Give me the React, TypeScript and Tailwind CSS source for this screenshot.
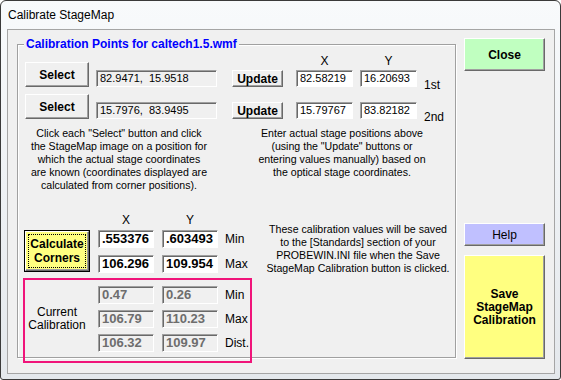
import React from 'react';

const font = { fontFamily: '"Liberation Sans", Arial, sans-serif' };

const raised =
  'border border-t-white border-l-white border-r-[#696969] border-b-[#696969] shadow-[inset_-1px_-1px_0_#a0a0a0]';
const sunken =
  'border border-t-[#a0a0a0] border-l-[#a0a0a0] border-r-white border-b-white shadow-[inset_1px_1px_0_#696969]';

const Field = ({
  value,
  className,
}: {
  value: string;
  className: string;
}) => (
  <div className={`${sunken} flex items-center pl-[3px] whitespace-pre ${className}`}>{value}</div>
);

const App = () => {
  const coordRows = [
    { point: '82.9471,  15.9518', x: '82.58219', y: '16.20693', tag: '1st', labels: true },
    { point: '15.7976,  83.9495', x: '15.79767', y: '83.82182', tag: '2nd', labels: false },
  ];

  const limits = [
    { x: '.553376', y: '.603493', label: 'Min' },
    { x: '106.296', y: '109.954', label: 'Max' },
  ];

  const current = [
    { x: '0.47', y: '0.26', label: 'Min' },
    { x: '106.79', y: '110.23', label: 'Max' },
    { x: '106.32', y: '109.97', label: 'Dist.' },
  ];

  return (
    <div
      className="relative w-[561px] h-[380px] overflow-hidden rounded-t-[6px] rounded-b-[3px] border border-[#3a3a3a] bg-gradient-to-b from-[#f8fafc] via-[#eef1f4] to-[#e4e8ec] text-black"
      style={font}
    >
      {/* Title bar */}
      <div className="h-[28px] pl-[7px] flex items-center text-[12px]">Calibrate StageMap</div>

      {/* Client area */}
      <div className="ml-[6px] w-[548px] h-[345px] border border-[#a5a5a5] bg-[#f0f0f0] flex items-start">
        {/* Group box */}
        <div className="relative ml-[9px] mt-[14px] w-[439px] h-[314px] border border-[#a0a0a0] shadow-[inset_1px_1px_0_#fff,1px_1px_0_#fff]">
          <div className="absolute left-[6px] -top-[9px] px-[2px] bg-[#f0f0f0] text-[12px] leading-[16px] font-bold text-[#0000ff]">
            Calibration Points for caltech1.5.wmf
          </div>

          <div className="flex flex-col">
            {/* Point rows */}
            {coordRows.map((row, i) => (
              <div key={i} className={`flex items-end ml-[7px] ${i === 0 ? 'mt-[10px]' : 'mt-[7px]'}`}>
                <button className={`${raised} w-[64px] h-[25px] bg-[#f0f0f0] text-[12px] font-bold`}>
                  Select
                </button>
                <Field value={row.point} className="ml-[7px] w-[121px] h-[17px] bg-[#f0f0f0] text-[11px]" />
                <button className={`${raised} ml-[15px] w-[51px] h-[17px] bg-[#f0f0f0] text-[12px] font-bold leading-none`}>
                  Update
                </button>
                <div className="ml-[13px] w-[57px] flex flex-col">
                  {row.labels && <div className="h-[13px] leading-[13px] text-[12px] text-center mb-[2px]">X</div>}
                  <Field value={row.x} className="h-[17px] bg-white text-[11px]" />
                </div>
                <div className="ml-[7px] w-[57px] flex flex-col">
                  {row.labels && <div className="h-[13px] leading-[13px] text-[12px] text-center mb-[2px]">Y</div>}
                  <Field value={row.y} className="h-[17px] bg-white text-[11px]" />
                </div>
                <div className="ml-[7px] -mb-[5px] text-[12px] leading-[13px]">{row.tag}</div>
              </div>
            ))}

            {/* Instructions */}
            <div className="flex mt-[8px] ml-[1px] text-[10.6px] leading-[13px] text-center">
              <p className="w-[200px]">
                Click each "Select" button and click
                <br />
                the StageMap image on a position for
                <br />
                which the actual stage coordinates
                <br />
                are known (coordinates displayed are
                <br />
                calculated from corner positions).
              </p>
              <p className="ml-[31px] w-[184px]">
                Enter actual stage positions above
                <br />
                (using the "Update" buttons or
                <br />
                entering values manually) based on
                <br />
                the optical stage coordinates.
              </p>
            </div>

            {/* Corners + current calibration */}
            <div className="flex mt-[22px] ml-[6px]">
              <div className="w-[240px] flex flex-col">
                <div className="flex h-[13px] leading-[13px] text-[12px]">
                  <div className="ml-[74px] w-[56px] text-center">X</div>
                  <div className="ml-[8px] w-[56px] text-center">Y</div>
                </div>
                <div className="flex mt-[3px]">
                  <button className="w-[66px] h-[42px] border border-black bg-[#ffff80] p-0">
                    <div className={`${raised} w-full h-full p-[2px]`}>
                      <div className="w-full h-full border border-dotted border-black flex items-center justify-center text-[12px] font-bold leading-[14px]">
                        Calculate
                        <br />
                        Corners
                      </div>
                    </div>
                  </button>
                  <div className="ml-[8px] flex flex-col gap-[7px]">
                    {limits.map((r) => (
                      <div key={r.label} className="flex items-center">
                        <Field value={r.x} className="w-[56px] h-[18px] bg-white text-[13px] font-bold" />
                        <Field value={r.y} className="ml-[8px] w-[56px] h-[18px] bg-white text-[13px] font-bold" />
                        <div className="ml-[7px] text-[12px]">{r.label}</div>
                      </div>
                    ))}
                  </div>
                </div>

                <div className="flex mt-[13px]">
                  <div className="w-[66px] flex items-center justify-center text-center text-[12px] leading-[13px]">
                    Current
                    <br />
                    Calibration
                  </div>
                  <div className="ml-[8px] flex flex-col gap-[6px]">
                    {current.map((r) => (
                      <div key={r.label} className="flex items-center">
                        <Field value={r.x} className="w-[56px] h-[18px] bg-[#f0f0f0] text-[13px] font-bold text-[#6d6d6d]" />
                        <Field value={r.y} className="ml-[8px] w-[56px] h-[18px] bg-[#f0f0f0] text-[13px] font-bold text-[#6d6d6d]" />
                        <div className="ml-[7px] text-[12px]">{r.label}</div>
                      </div>
                    ))}
                  </div>
                </div>
              </div>

              <p className="ml-[2px] mt-[9px] w-[184px] text-[10.6px] leading-[13px] text-center">
                These calibration values will be saved
                <br />
                to the [Standards] section of your
                <br />
                PROBEWIN.INI file when the Save
                <br />
                StageMap Calibration button is clicked.
              </p>
            </div>
          </div>
        </div>

        {/* Right column buttons */}
        <div className="ml-[8px] mt-[8px] w-[81px] flex flex-col">
          <button className={`${raised} h-[33px] bg-[#c0ffc0] text-[12px] font-bold`}>Close</button>
          <button className={`${raised} mt-[152px] h-[23px] bg-[#c0c0ff] text-[12px]`}>Help</button>
          <button className={`${raised} mt-[9px] h-[104px] bg-[#ffff80] text-[12px] font-bold leading-[13px]`}>
            Save
            <br />
            StageMap
            <br />
            Calibration
          </button>
        </div>
      </div>

      {/* Annotation */}
      <div className="absolute left-[22px] top-[277px] w-[229px] h-[85px] border-2 border-[#f0147a]" />
    </div>
  );
};

export default App;
